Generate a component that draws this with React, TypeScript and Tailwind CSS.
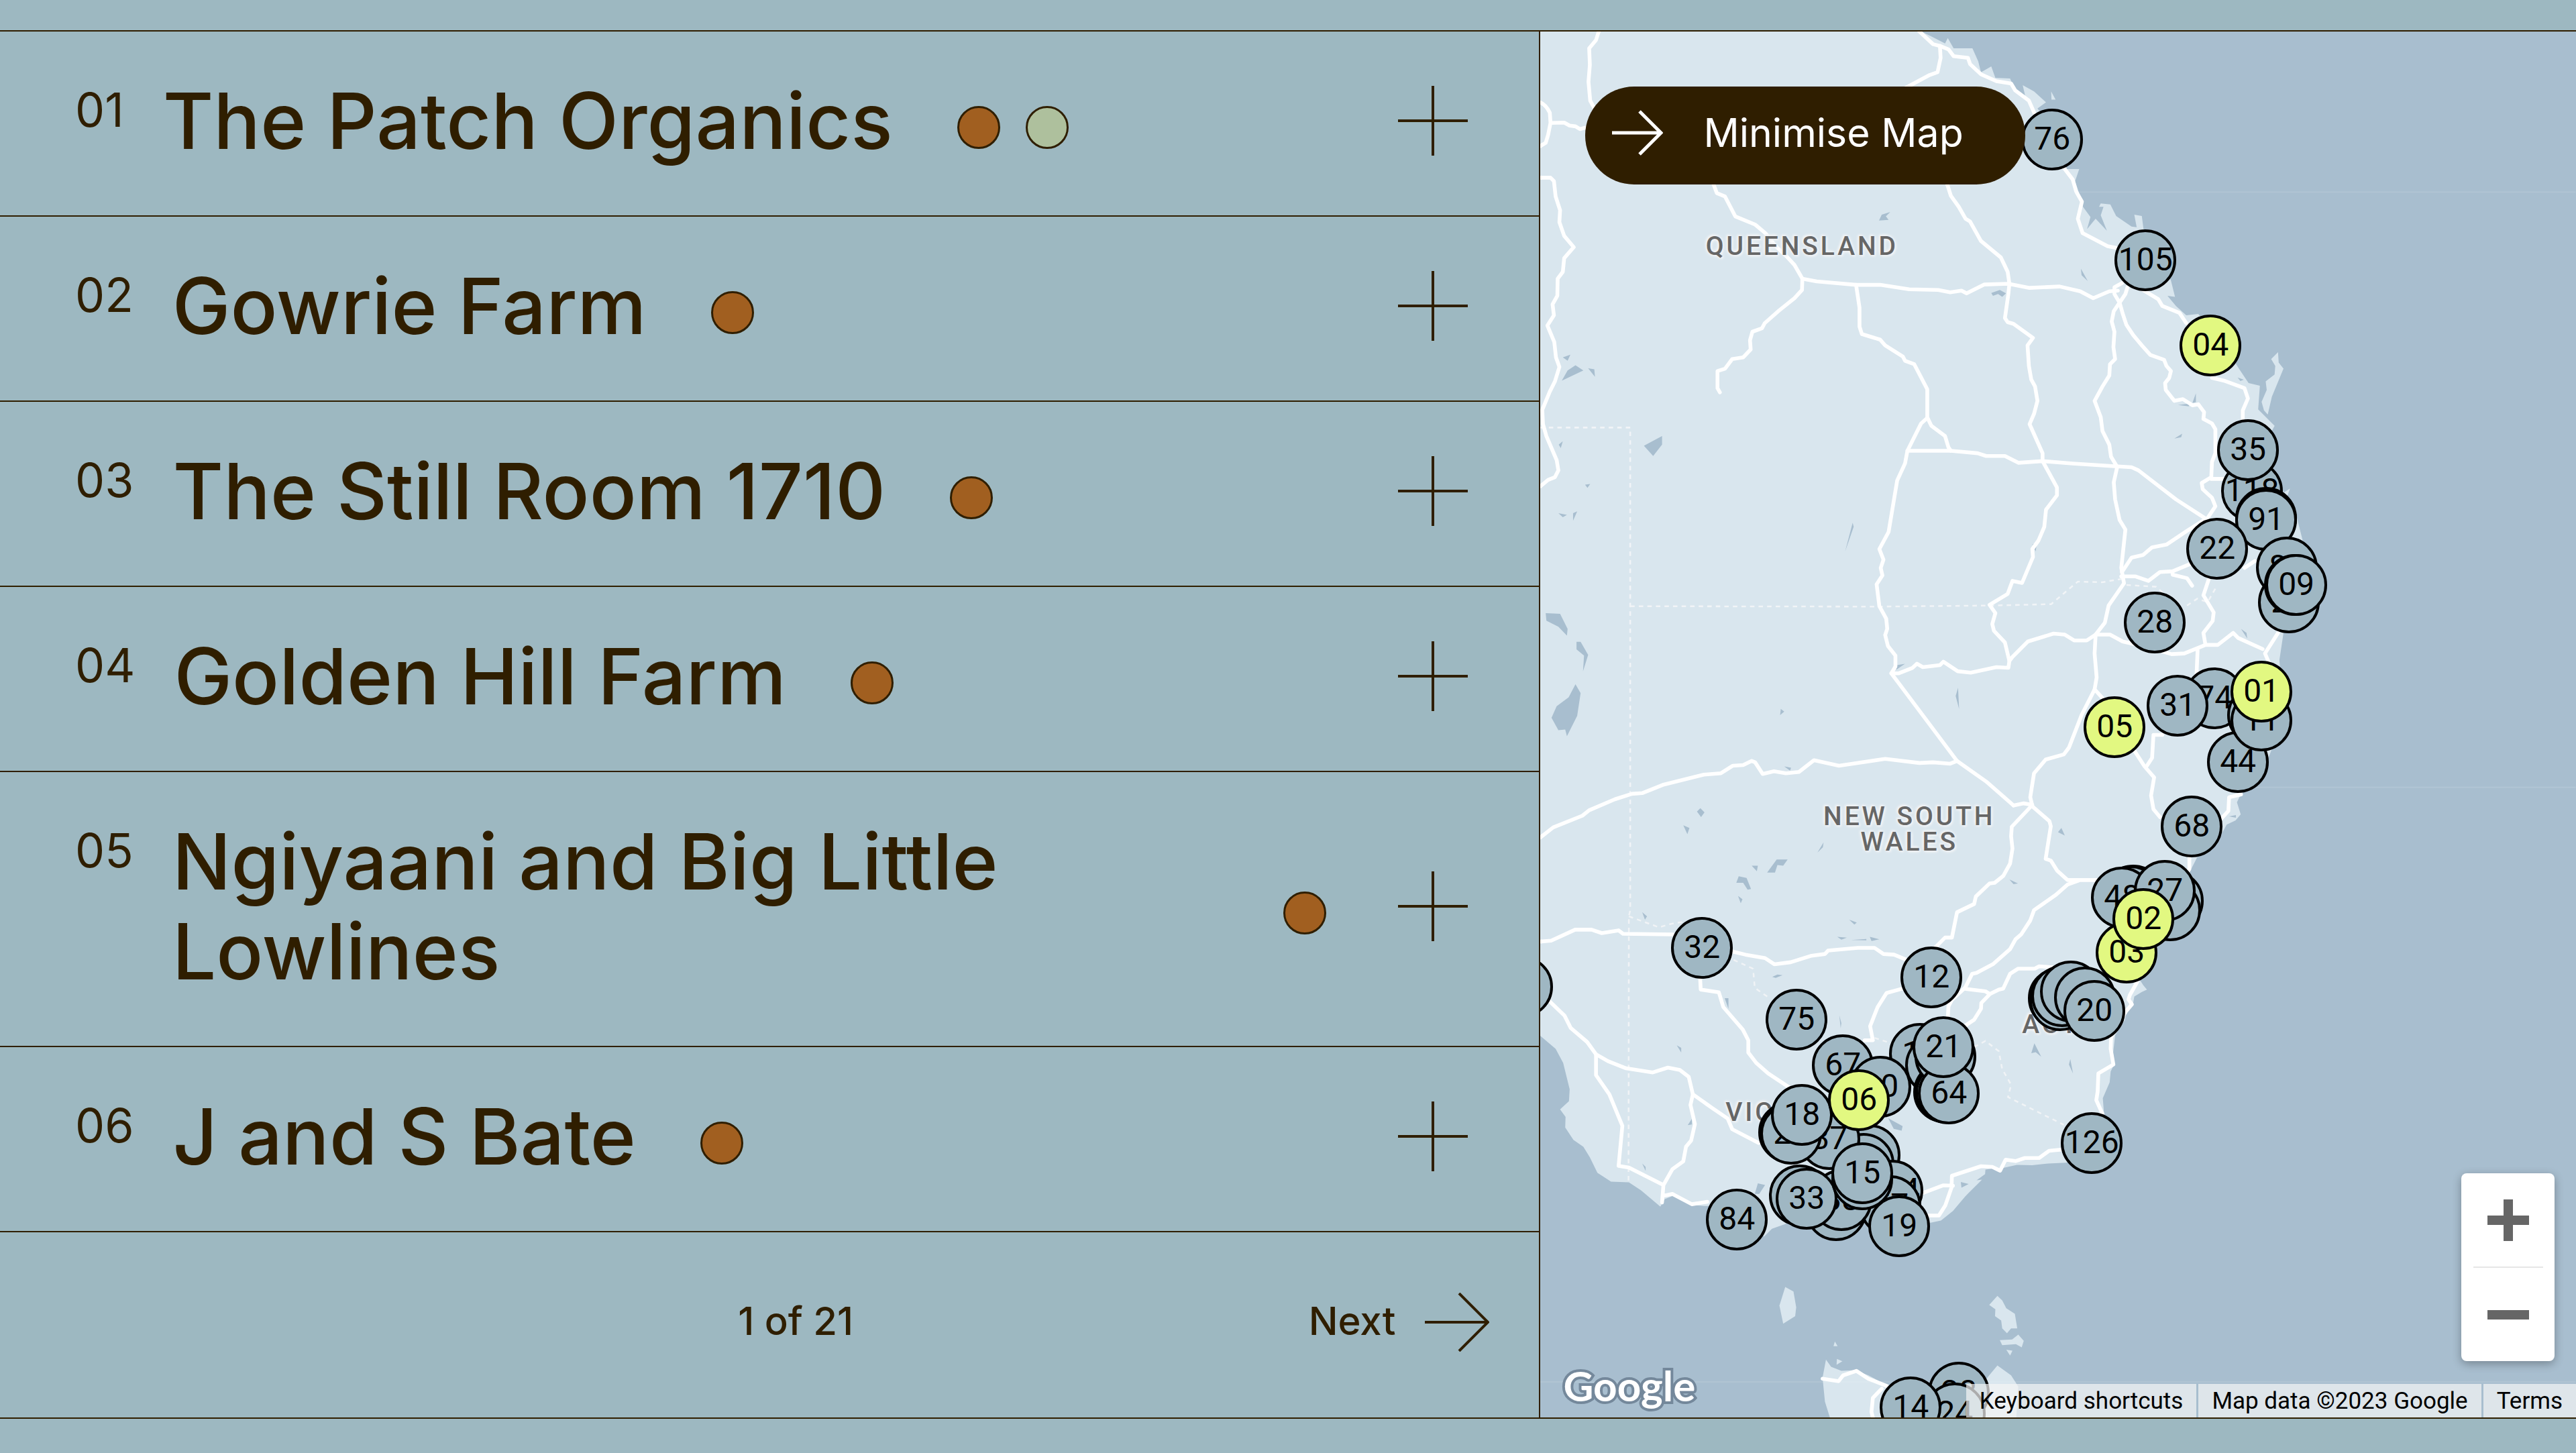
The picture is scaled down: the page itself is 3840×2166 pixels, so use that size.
import React, { useState } from 'react';

type Farm = { id: string; name: string; tags: ('orange' | 'green')[] };

const farms: Farm[] = [
  { id: '01', name: 'The Patch Organics', tags: ['orange', 'green'] },
  { id: '02', name: 'Gowrie Farm', tags: ['orange'] },
  { id: '03', name: 'The Still Room 1710', tags: ['orange'] },
  { id: '04', name: 'Golden Hill Farm', tags: ['orange'] },
  { id: '05', name: 'Ngiyaani and Big Little Lowlines', tags: ['orange'] },
  { id: '06', name: 'J and S Bate', tags: ['orange'] },
];

// Marker positions on a 1544 x 2066 map, later entries are stacked on top
const MAP_W = 1544;
const MAP_H = 2066;

type Marker = { x: number; y: number; label?: string; active?: boolean };

const markers: Marker[] = [
  { x: 763, y: 161, label: '76' },
  { x: 902, y: 341, label: '105' },
  { x: 999, y: 468, label: '04', active: true },
  { x: 1061, y: 685, label: '118' },
  { x: 1055, y: 624, label: '35' },
  { x: 1082, y: 725 },
  { x: 1082, y: 728, label: '91' },
  { x: 1009, y: 771, label: '22' },
  { x: 1113, y: 799, label: '85' },
  { x: 1116, y: 851, label: '29' },
  { x: 1125, y: 825 },
  { x: 1127, y: 825, label: '09' },
  { x: 916, y: 881, label: '28' },
  { x: 1005, y: 994, label: '74' },
  { x: 950, y: 1005, label: '31' },
  { x: 1040, y: 1089, label: '44' },
  { x: 1070, y: 1019 },
  { x: 1075, y: 1027, label: '11' },
  { x: 1075, y: 984, label: '01', active: true },
  { x: 856, y: 1037, label: '05', active: true },
  { x: 971, y: 1185, label: '68' },
  { x: 884, y: 1288 },
  { x: 880, y: 1289 },
  { x: 867, y: 1291, label: '48' },
  { x: 943, y: 1296 },
  { x: 939, y: 1310 },
  { x: 931, y: 1281, label: '27' },
  { x: 874, y: 1373, label: '03', active: true },
  { x: 899, y: 1323, label: '02', active: true },
  { x: 773, y: 1441 },
  { x: 775, y: 1444 },
  { x: 778, y: 1438 },
  { x: 791, y: 1431 },
  { x: 812, y: 1440 },
  { x: 826, y: 1460, label: '20' },
  { x: 822, y: 1657, label: '126' },
  { x: -27, y: 1424 },
  { x: 241, y: 1366, label: '32' },
  { x: 583, y: 1410, label: '12' },
  { x: 382, y: 1473, label: '75' },
  { x: 451, y: 1541, label: '67' },
  { x: 566, y: 1524, label: '10' },
  { x: 590, y: 1541, label: '17' },
  { x: 602, y: 1581 },
  { x: 605, y: 1582 },
  { x: 604, y: 1528 },
  { x: 609, y: 1583, label: '64' },
  { x: 601, y: 1514, label: '21' },
  { x: 507, y: 1573, label: '80' },
  { x: 491, y: 1675 },
  { x: 482, y: 1688 },
  { x: 431, y: 1651, label: '37' },
  { x: 371, y: 1641 },
  { x: 374, y: 1643, label: '22' },
  { x: 390, y: 1615, label: '18' },
  { x: 475, y: 1593, label: '06', active: true },
  { x: 525, y: 1728, label: '114' },
  { x: 522, y: 1751, label: '57' },
  { x: 441, y: 1757 },
  { x: 449, y: 1742, label: '38' },
  { x: 387, y: 1735 },
  { x: 397, y: 1740, label: '33' },
  { x: 480, y: 1711 },
  { x: 480, y: 1702, label: '15' },
  { x: 535, y: 1781, label: '19' },
  { x: 293, y: 1771, label: '84' },
  { x: 624, y: 2029, label: '28' },
  { x: 618, y: 2060, label: '24' },
  { x: 552, y: 2051, label: '14' },
];

const land = [
  'M10 33H1125L1150 45 1195 68 1203 52 1220 82H1275L1292 120 1300 152 1330 135 1342 168 1385 170 1400 205 1430 225 1422 190 1455 208 1490 240 1465 258 1520 330 1545 400 1550 435H1587L1575 470 1585 500 1598 545 1620 575 1610 610 1635 580 1668 615 1650 570 1658 545 1645 545 1650 535 1678 538 1695 572 1740 603 1755 605 1748 568 1770 572 1775 610 1820 700 1855 760 1867 808 1845 805 1870 835 1900 862 1935 858 2030 980 2055 1020 2082 1060 2115 1068 2110 1137 2158 1185 2150 1200 2150 1310 2185 1380 2203 1368 2195 1390 2220 1440 2240 1520 2262 1570 2240 1700 2184 1790 2172 1870 2187 2030 2142 2150 2055 2270 2048 2285 2059 2320 2044 2338 2018 2350 2007 2370 1932 2445 1909 2490 1850 2570 1812 2720 1764 2803 1774 2819 1785 2832 1770 2839 1748 2852 1744 2875 1725 2894 1721 2920 1692 2966 1686 3018 1689 3051 1679 3071 1676 3103 1656 3149 1659 3188 1666 3240 1627 3325 1548 3338 1496 3340 1450 3345 1405 3344 1365 3353 1352 3365 1333 3355 1313 3358 1312 3371 1287 3389 1303 3387 1254 3436 1218 3479 1183 3507 1143 3515 1060 3500 954 3480 860 3490 790 3490 725 3518 689 3531 666 3554 620 3500 578 3464H490L455 3461 402 3434 376 3444 363 3466 306 3418 271 3395 219 3393 179 3367 157 3322 138 3291 109 3271 85 3235 86 3204 70 3182 96 3158 98 3123 79 3046 57 3005 10 2965Z',
  // Tasmania
  'M837 3966L847 3913 862 3934 892 3946 932 3944 971 3959 1019 3985 1200 4010 1300 3990 1324 3959 1348 3930 1388 3959 1409 3992 1402 4100H864L844 4036Z',
  // islands
  'M1348 3727L1324 3753 1342 3766 1341 3786 1359 3799 1362 3822 1376 3836 1388 3822H1406L1399 3779 1374 3763 1362 3740Z',
  'M1355 3856L1391 3854 1409 3840 1425 3858 1419 3877 1402 3868 1362 3871ZM1374 3884L1392 3887 1385 3901Z',
  'M728 3701L752 3714 760 3760 757 3786 722 3808 711 3755Z',
  'M873 3860L881 3874H869ZM879 3911L895 3918 878 3928Z',
  'M2168 970L2148 990 2160 1010 2158 1035 2132 1055 2135 1080 2120 1115 2127 1140 2138 1152 2150 1100 2184 1018 2170 1000Z',
  'M1505 208L1518 232H1506Z',
];

const lakes = [
  'M315 1243L368 1215V1240L342 1273Z',
  'M75 1053L92 1023 115 1008 138 1023ZM152 1017L170 1020 172 1042ZM78 985L100 977 92 995Z',
  'M1002 585L1010 568 1035 560 1022 573 1030 583ZM1330 797L1355 788 1373 798 1362 808 1350 800 1335 805Z',
  'M925 1468L928 1480 903 1552ZM65 1440L90 1445 78 1452ZM108 1440L120 1435 108 1462ZM143 1357L158 1355 150 1366ZM66 1240L78 1230 72 1250Z',
  'M28 1732L70 1734 92 1778 90 1798 65 1772 30 1754ZM118 1816H130L152 1854 137 1902 140 1856 118 1838Z',
  'M115 1940L130 1966 120 2032 90 2092 85 2072 65 2074 45 2038 60 2004 95 1978Z',
  'M470 2312L480 2302 492 2314 482 2328ZM430 2352L448 2360 442 2378ZM585 2520L592 2501 615 2506 628 2538 618 2540 605 2520Z',
  'M630 2470H648L645 2486ZM675 2490L703 2452H735L722 2470 705 2468 698 2490ZM840 2402L838 2416 822 2432ZM590 2558L603 2568 598 2580Z',
  'M1233 1950L1236 2012 1226 1974ZM715 2012L725 2020 713 2030ZM880 2678L908 2680 892 2686ZM920 2687L965 2684V2688ZM975 2678L1003 2685 980 2690Z',
  'M915 2628L937 2636 930 2642ZM1525 2372L1535 2360 1545 2382ZM1383 2510L1408 2522 1395 2524ZM725 2180L745 2184 742 2192ZM1055 1884L1078 1880 1052 1898Z',
  'M310 2606L324 2618 318 2628ZM690 2795L705 2788 720 2790 700 2798ZM1450 1532L1463 1528 1460 1552Z',
  'M1447 3018L1456 2989 1476 3028 1460 3015ZM1561 3035L1569 3077 1557 3051ZM551 2857H562V2888ZM648 3398L669 3403 652 3429H639Z',
  'M411 2995L424 3002V3016ZM1241 3394L1264 3400 1243 3411ZM1029 3208L1071 3231 1068 3244 1045 3239ZM443 3228L455 3210V3226ZM310 3340L320 3350V3362Z',
  'M1592 726L1612 762 1594 745ZM1865 1222L1888 1208 1885 1218ZM1918 1118L1928 1090V1116ZM1876 1124L1908 1120V1128ZM2050 1044L2068 1050 2058 1054Z',
  'M2025 2326L2045 2322V2330ZM2060 1778L2076 1790 2078 1806ZM886 2907L890 2945 892 2930Z',
];

const roads = [
  'M183 33L175 58 155 82 157 130 153 180 158 235 180 275',
  'M12 240Q28 246 40 270L42 300 35 335 28 358 12 368M42 300L82 299 98 308 115 310 128 318 150 312',
  'M12 460H42L52 470 57 515 70 555 68 590 82 630 110 663 82 695 78 735 63 755 62 805 48 830 52 862 33 892 53 940 58 985 68 1013 55 1055 40 1085 18 1138 20 1180 30 1215 60 1285 65 1315 55 1335 35 1343 12 1362',
  'M515 470L528 505 552 515 582 573 640 597 670 622 700 660 735 693 755 715 778 755 777 788 755 812 710 848 668 885 660 900 632 910 625 935 627 962 605 985 573 990 552 1018 530 1025V1075L537 1087',
  'M778 755L820 763 935 773H1005L1090 786 1175 788 1210 795 1243 790 1258 798 1310 772 1380 770 1442 782 1530 778 1590 792 1628 812 1675 792 1700 790',
  'M935 773L945 840V895L952 917 1005 933 1020 950 1072 983 1078 995 1105 1005 1143 1078V1160L1155 1185 1195 1215 1205 1248 1212 1258',
  'M1143 1162L1125 1178 1085 1258 1078 1295 1055 1345 1030 1495 1003 1545 1015 1576 1007 1600 1012 1622 995 1648 1003 1712 1023 1748 1026 1778 1020 1796 1028 1828 1050 1856V1888L1038 1908 1230 2164 1315 2224 1395 2294',
  'M1085 1258H1212L1290 1265 1315 1273H1370L1410 1293 1480 1288 1568 1295 1690 1303 1740 1306 1760 1315 1870 1400 1955 1455',
  'M1200 475L1212 513 1235 545 1255 580 1268 588 1300 645 1358 693 1378 735 1383 770 1380 800 1370 870 1378 882 1395 887 1452 928 1436 950 1440 1010 1447 1050 1458 1070 1465 1112 1455 1150 1442 1180 1480 1265V1288L1522 1365V1388L1490 1430 1485 1480 1468 1520 1450 1545 1452 1568 1420 1644 1392 1638 1378 1676 1325 1708 1342 1732 1333 1764 1338 1784 1370 1818 1383 1872 1380 1892 1345 1890 1270 1906 1232 1902 1190 1874 1180 1884 1130 1890 1113 1880 1100 1892 1060 1908H1038',
  'M1120 33L1160 70 1180 75 1205 85 1220 105 1262 110 1268 128 1300 158 1345 178 1388 185 1400 205 1440 235 1460 280 1500 380 1545 435 1568 465 1578 500 1595 530 1583 580 1597 622 1670 660 1700 666',
  'M1180 75L1182 110 1173 152 1150 160 1075 200',
  'M1760 780L1818 815 1830 835 1880 855 1900 885M1975 1045L2010 1053 2070 1075 2080 1105 2065 1140V1165',
  'M1712 768L1690 780V800L1705 825M1728 780L1722 800 1705 825 1715 860 1725 890 1745 920 1770 950 1795 978 1835 992 1842 1010 1855 1025 1850 1045 1838 1060 1840 1080 1865 1112 1890 1107 1918 1125 1935 1122 1952 1145 1950 1165 1975 1178 1985 1195V1265L1975 1290 1973 1335 1945 1352 1948 1370 1975 1395 1985 1420 1965 1450M1973 1340H2020',
  'M1705 825L1688 850 1682 880 1690 910 1687 955 1692 990 1677 1005 1675 1038 1655 1070 1632 1112 1650 1160 1655 1200 1675 1240 1680 1275 1698 1305 1688 1350 1692 1400 1705 1460 1722 1488 1710 1600 1718 1645 1673 1710 1662 1760 1635 1795 1632 1850 1638 1920 1632 1955 1594 2030 1557 2125 1542 2145 1489 2160 1455 2200 1444 2270 1450 2295',
  'M1712 1612L1740 1570 1774 1562 1800 1540 1842 1532 1902 1492 1960 1455M1710 1625H1752L1789 1638 1823 1612 1860 1610 1920 1585M1860 1610V1620L1902 1630 1917 1652',
  'M1965 1635L1950 1680 1980 1730 1977 1755 1950 1790 1956 1825M1383 1872L1392 1860 1437 1815 1512 1792 1545 1795 1572 1812H1609L1635 1795H1677L1714 1815 1780 1830 1857 1852 1894 1850 1956 1825H1992L2037 1790 2052 1805 2123 1837M1933 1840L1930 1910',
  'M2168 1790L2149 1820 2130 1850 2145 1885M1632 1955L1664 1990 1752 2140 1778 2180 1806 2212 1797 2265 1804 2305 1823 2328M1830 2088H1804L1800 2155 1785 2178M2060 2262L2025 2270 2023 2310 2000 2335M2070 1600L2100 1580',
  'M1450 2292L1425 2288 1395 2294M1230 2164L1210 2172 1160 2168 1120 2170 1020 2158 885 2178 812 2162 768 2196 730 2200 695 2194 662 2202 640 2168 630 2164 605 2176 575 2178 540 2200 490 2204 370 2234 310 2258 280 2260 230 2276 155 2308 135 2324 50 2358 12 2388',
  'M1448 2295L1390 2356 1388 2384 1392 2420 1385 2464 1365 2500 1340 2520 1325 2522 1285 2560 1280 2582 1230 2606 1215 2680H1195L1165 2710',
  'M1448 2295L1500 2340 1504 2355 1489 2450 1504 2455 1523 2485 1553 2512H1640M1587 2513L1553 2525 1519 2555 1455 2600 1444 2630 1418 2670 1401 2685 1385 2714 1336 2757 1287 2783 1274 2786 1254 2826 1215 2862 1205 2881 1203 2915',
  'M1256 2830L1313 2837 1326 2845 1352 2832 1365 2829 1385 2786 1408 2771H1457L1470 2764 1510 2767M1326 2845L1301 2871 1300 2888 1280 2920 1250 2940',
  'M1909 2440V2480L1880 2520M1757 2809L1735 2848 1731 2861 1741 2875 1725 2894 1690 2950 1680 2973 1679 3005 1687 3051 1643 3077 1641 3129 1637 3155 1655 3195M1540 3299L1499 3303 1470 3324H1428L1401 3333 1372 3329 1356 3361 1333 3350 1300 3348 1215 3376 1214 3410 1196 3462 1177 3492H1140M1120 3430L1189 3404 1218 3405',
  'M10 2692L44 2689 114 2657H162L192 2667 241 2659 254 2669 400 2671M570 2720L612 2730 669 2740 696 2758 744 2752 805 2733 844 2728 853 2718 940 2710H989L1015 2728 1046 2730 1090 2748',
  'M479 2795L481 2832 534 2840 547 2883 604 2949 620 2980V3016L643 3046 678 3077 740 3118',
  'M38 2865L83 2908 101 2944 149 2985 175 3021 210 3041 263 3062 341 3074 385 3060 420 3067 446 3087 458 3138 516 3179 560 3209 573 3240 650 3280',
  'M175 3021V3082L214 3138 252 3230 241 3347 271 3352 372 3403 368 3454M370 3435L398 3429 455 3459 500 3452M458 3138L451 3169 464 3225 453 3273 438 3291 430 3334 398 3357 372 3403',
  'M1075 2828L1024 2842 998 2883 976 2939 984 2980H960',
  'M837 3969L884 3976 897 3959 936 3946 971 3969 1025 3990M1010 3998L984 4025 980 4066 986 4090',
];

const borders = [
  'M12 1190H275V2600L271 2618 270 3393M275 1712L1003 1713 1330 1710 1505 1706 1583 1640 1654 1642 1712 1632M1725 1650L1812 1655 1850 1690M1902 1710L1932 1690 1962 1700 1988 1655',
  'M271 2618L359 2650 394 2640 430 2634M577 2745L634 2771 639 2827 678 2854M989 2973L1041 2990M1280 3000L1313 2982 1352 3012 1362 3064 1388 3110 1379 3146 1463 3188 1542 3227',
];

const stateLabels = [
  { text: 'QUEENSLAND', x: 390, y: 320 },
  { text: 'NEW SOUTH\nWALES', x: 550, y: 1189 },
  { text: 'VICTORIA', x: 378, y: 1611 },
  { text: 'ACT', x: 761, y: 1480 },
];

const position = (x: number, y: number) => ({
  left: `${(x / MAP_W) * 100}%`,
  top: `${(y / MAP_H) * 100}%`,
});

const MapCanvas = () => (
  <svg
    className="absolute inset-0 h-full w-full"
    viewBox="12 33 3026 4049"
    preserveAspectRatio="none"
    aria-hidden="true"
  >
    <g fill="#d9e6ee">
      {land.map((d) => <path key={d} d={d} />)}
    </g>
    <g fill="#a8becf">
      {lakes.map((d) => <path key={d} d={d} />)}
    </g>
    <g fill="none" stroke="#f3f5f7" strokeWidth="5" strokeDasharray="13 12" opacity="0.9">
      {borders.map((d) => <path key={d} d={d} />)}
    </g>
    <g fill="none" stroke="#ffffff" strokeWidth="11" strokeLinejoin="round" strokeLinecap="round">
      {roads.map((d) => <path key={d} d={d} />)}
    </g>
    <path d="M1585 502H3038M2050 2241H3038M12 3978H3038" stroke="#ffffff" strokeWidth="3" opacity="0.12" />
  </svg>
);

const FarmRow = ({ farm }: { farm: Farm }) => {
  const [open, setOpen] = useState(false);

  return (
    <li className="flex border-b-2 border-[#2f1e00] pr-[106px] pb-[74px] pl-28 pt-[66px]">
      <span className="mr-[58px] text-[70px] leading-[102px]">{farm.id}</span>
      <h2 className="mr-24 min-w-0 text-[116px] leading-[134px] font-medium">{farm.name}</h2>
      <div className="mt-5 flex shrink-0 gap-[38px] self-center">
        {farm.tags.map((tag) => (
          <span
            key={tag}
            className={`size-16 rounded-full border-3 border-[#2f1e00] ${tag === 'orange' ? 'bg-[#a15f20]' : 'bg-[#aec09d]'}`}
          />
        ))}
      </div>
      <div className="ml-auto flex shrink-0 self-center pl-[107px]">
        <button type="button" aria-label={farm.name} aria-expanded={open} onClick={() => setOpen(!open)}>
          <svg className="size-[104px]" viewBox="0 0 104 104" stroke="currentColor" strokeWidth="4">
            <path d="M52 0V104M0 52H104" />
          </svg>
        </button>
      </div>
    </li>
  );
};

export default function App() {
  return (
    <div className="min-h-screen bg-[#9db8c1] pt-[45px] pb-[51px] font-['Inter',sans-serif] text-[#2f1e00]">
      <main className="flex border-y-2 border-[#2f1e00]">
        {/* Farm list */}
        <section className="flex flex-1 flex-col">
          <ul>
            {farms.map((farm) => <FarmRow key={farm.id} farm={farm} />)}
          </ul>
          <nav className="grid h-[276px] grid-cols-3 items-center pr-[74px] pb-2 pl-[152px] text-[58px] font-medium">
            <p className="col-start-2 pb-1 text-center">1 of 21</p>
            <a href="#next" className="flex items-center gap-11 justify-self-end">
              <span className="pb-1">Next</span>
              <svg className="h-[88px] w-24" viewBox="0 0 96 88" fill="none" stroke="currentColor" strokeWidth="4">
                <path d="M0 44H94M51 1L94 44L51 87" />
              </svg>
            </a>
          </nav>
        </section>

        {/* Map */}
        <aside className="relative w-[40.25%] overflow-hidden border-l-2 border-[#2f1e00] bg-[#a8becf] font-['Roboto',sans-serif] text-black">
          <MapCanvas />

          {stateLabels.map((label) => (
            <span
              key={label.text}
              className="absolute -translate-x-1/2 -translate-y-1/2 whitespace-pre text-center text-[39px] leading-[38px] font-medium tracking-widest text-[#666666] [text-shadow:0_0_4px_#f1f3f5,0_0_6px_#f1f3f5,2px_2px_3px_#f1f3f5,-2px_-2px_3px_#f1f3f5]"
              style={position(label.x, label.y)}
            >
              {label.text}
            </span>
          ))}

          {markers.map((marker) => (
            <button
              key={`${marker.x}-${marker.y}`}
              type="button"
              className={`absolute flex size-[92px] -translate-x-1/2 -translate-y-1/2 items-center justify-center rounded-full border-4 border-black pb-0.5 text-[48px] leading-none ${marker.active ? 'bg-[#e2f881]' : 'bg-[#9fb7c3]'}`}
              style={position(marker.x, marker.y)}
            >
              {marker.label}
            </button>
          ))}

          <button
            type="button"
            className="absolute top-[82px] left-[67px] flex h-[146px] items-center gap-[60px] rounded-full bg-[#2f1e00] pr-[92px] pb-2 pl-10 font-['Inter',sans-serif] text-[59px] text-white"
          >
            <svg className="h-[68px] w-[76px]" viewBox="0 0 76 68" fill="none" stroke="currentColor" strokeWidth="5">
              <path d="M0 34H73M41 2L73 34L41 66" />
            </svg>
            Minimise Map
          </button>

          <span className="absolute bottom-2 left-[34px] font-['Lato',sans-serif] text-[62px] leading-[80px] font-bold text-white [paint-order:stroke_fill] [-webkit-text-stroke:8px_#74889b]">
            Google
          </span>

          <div className="absolute right-8 bottom-[84px] flex w-[139px] flex-col items-center rounded-lg bg-white shadow-[0_4px_14px_rgba(0,0,0,0.3)]">
            <button type="button" aria-label="Zoom in" className="flex h-[139px] w-full items-center justify-center">
              <svg className="size-[62px]" viewBox="0 0 62 62" stroke="#666666" strokeWidth="14">
                <path d="M31 0V62M0 31H62" />
              </svg>
            </button>
            <div className="h-0.5 w-[104px] bg-[#e6e6e6]" />
            <button type="button" aria-label="Zoom out" className="flex h-[139px] w-full items-center justify-center">
              <svg className="size-[62px]" viewBox="0 0 62 62" stroke="#666666" strokeWidth="14">
                <path d="M0 31H62" />
              </svg>
            </button>
          </div>

          <div className="absolute right-0 bottom-0 flex gap-[3px] text-[35px] leading-[48px] whitespace-nowrap">
            <button type="button" className="bg-[#f5f5f5]/70 px-5 pt-0.5">Keyboard shortcuts</button>
            <span className="bg-[#f5f5f5]/70 px-5 pt-0.5">Map data ©2023 Google</span>
            <a href="#terms" className="bg-[#f5f5f5]/70 px-5 pt-0.5">Terms</a>
          </div>
        </aside>
      </main>
    </div>
  );
}
